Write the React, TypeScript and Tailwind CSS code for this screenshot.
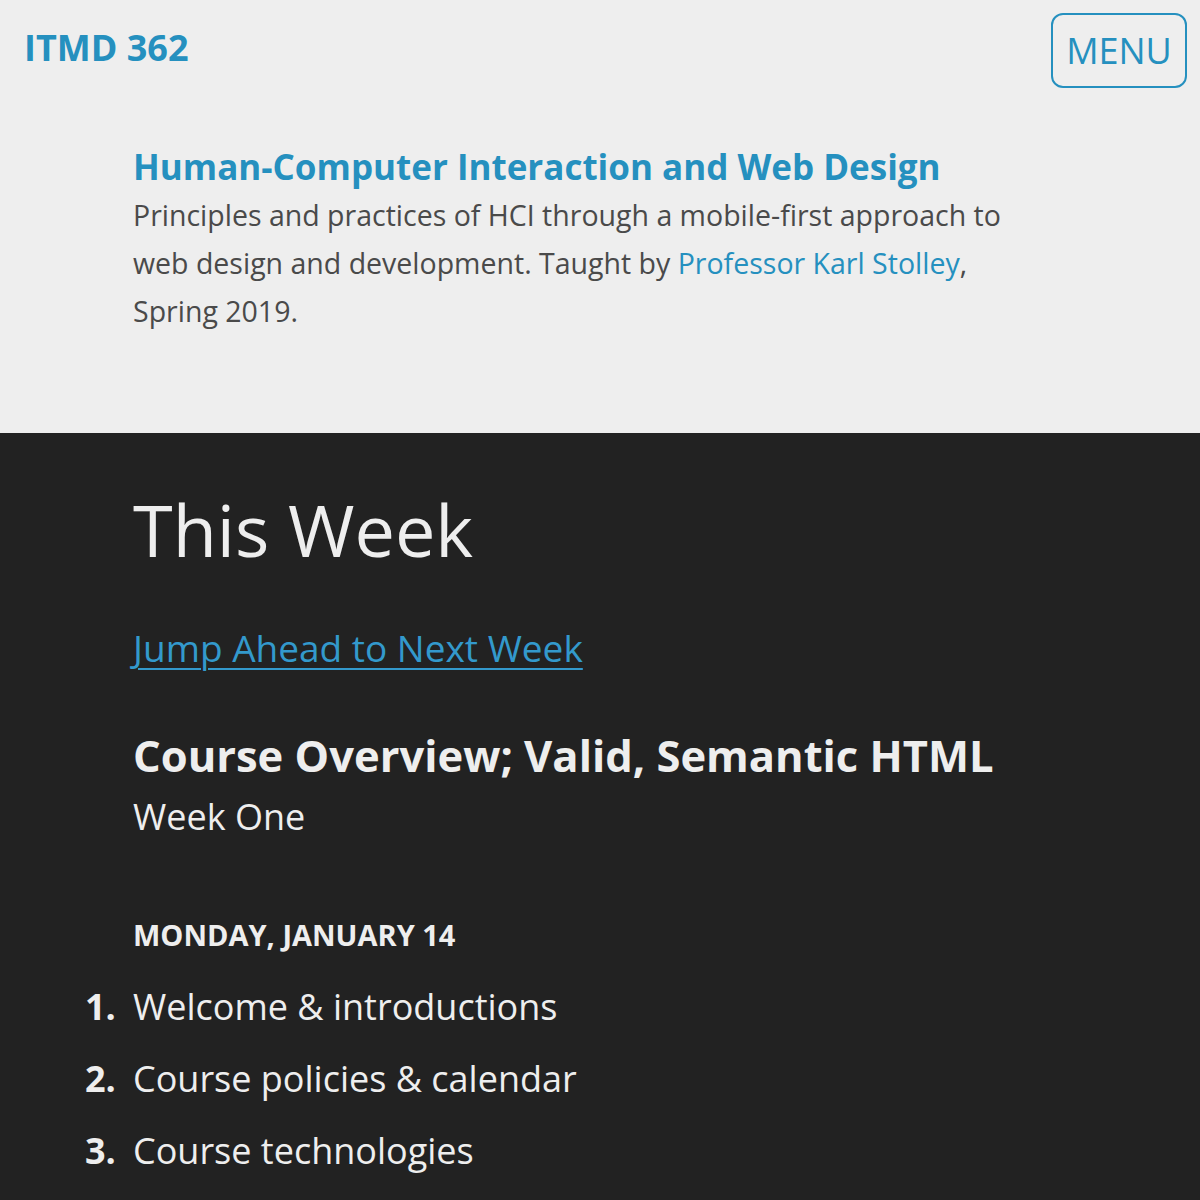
export default function App() {
  const items = ["Welcome & introductions", "Course policies & calendar", "Course technologies"];
  return (
    <div className="min-h-[1200px] bg-[#222222] font-['Open_Sans',sans-serif]">
      <header className="bg-[#eeeeee] pb-[98px]">
        <div className="flex items-start justify-between pl-[24px] pr-[13px] pt-[13px]">
          <a href="#" className="mt-[15px] text-[36px] font-bold leading-[40px] text-[#2590bf]">ITMD 362</a>
          <button className="h-[75px] w-[136px] rounded-[12px] border-2 border-[#2590bf] text-[36px] text-[#2590bf]">MENU</button>
        </div>
        <div className="mt-[55px] pl-[133px] pr-[150px]">
          <h1 className="text-[35px] font-bold leading-[48px] text-[#2590bf]">Human-Computer Interaction and Web Design</h1>
          <p className="text-[28.5px] leading-[48px] text-[#4a4a4a]">
            Principles and practices of HCI through a mobile-first approach to web design and development. Taught by{" "}
            <a href="#" className="text-[#2590bf]">Professor Karl Stolley</a>, Spring 2019.
          </p>
        </div>
      </header>
      <main className="pl-[133px] pr-[100px] pt-[48px] text-[#eeeeee]">
        <h2 className="text-[72px] leading-[96px]">This Week</h2>
        <a href="#" className="mt-[47px] inline-block text-[37px] leading-[48px] text-[#3399cc] underline underline-offset-[6px] decoration-2">Jump Ahead to Next Week</a>
        <div className="mt-[56px]">
          <h3 className="text-[43.5px] font-bold leading-[56px]">Course Overview; Valid, Semantic HTML</h3>
          <p className="mt-[5px] text-[36px] leading-[56px]">Week One</p>
        </div>
        <h4 className="mt-[66px] text-[29px] font-bold uppercase leading-[48px]">Monday, January 14</h4>
        <ol className="mt-[12px] text-[36px] leading-[72px]">
          {items.map((t, i) => (
            <li key={t} className="-ml-[48px] flex">
              <span className="w-[48px] font-bold">{i + 1}.</span>
              <span>{t}</span>
            </li>
          ))}
        </ol>
      </main>
    </div>
  );
}
